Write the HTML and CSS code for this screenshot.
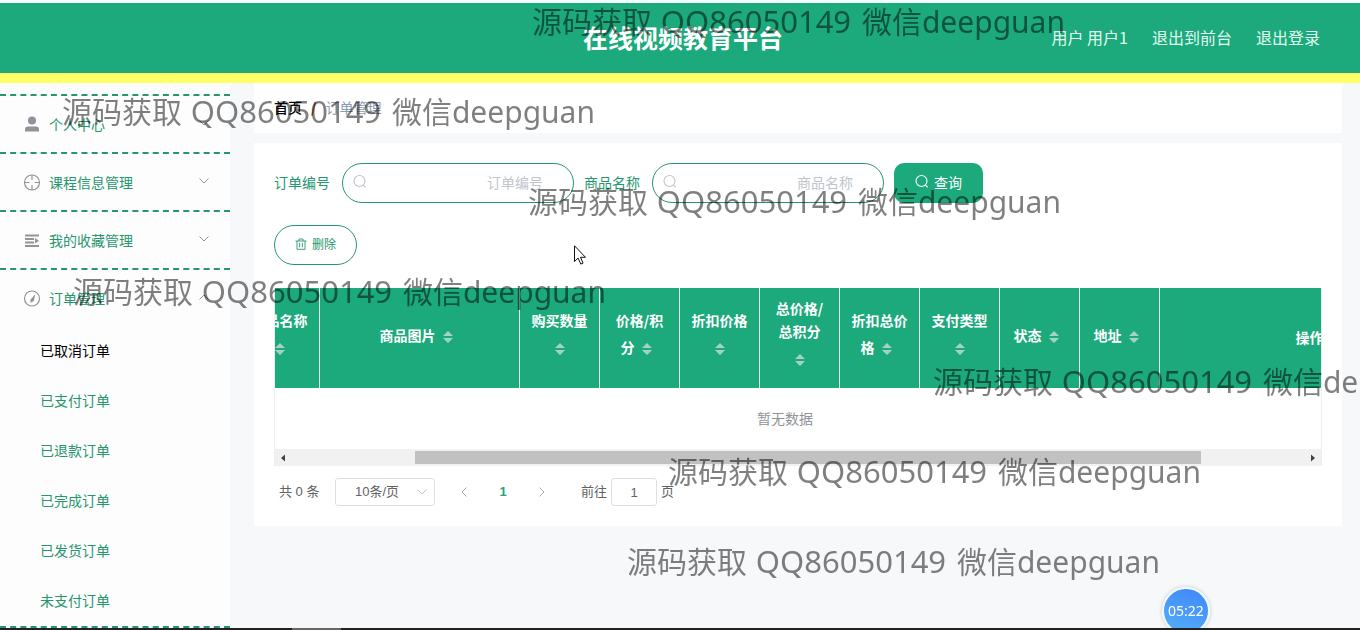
FILE: index.html
```html
<!DOCTYPE html>
<html lang="zh-CN">
<head>
<meta charset="utf-8">
<title>在线视频教育平台</title>
<link rel="stylesheet" href="styles.css">
</head>
<body>
<svg class="sprite" aria-hidden="true">
  <symbol id="down" viewBox="0 0 12 12"><path d="M1.500 3.500 6 8l4.500-4.500" fill="none" stroke="currentColor"/></symbol>
  <symbol id="search" viewBox="0 0 16 16"><circle cx="7.500" cy="7" r="5.500" fill="none" stroke="currentColor" stroke-width="1.100"/><path d="m11.500 11.200 2.200 2.200" stroke="currentColor" stroke-width="1.100"/></symbol>
  <symbol id="sort" viewBox="0 0 10 12"><path d="M0 5 5 0l5 5zM0 7h10l-5 5z" fill="currentColor"/></symbol>
</svg>

<header class="header">
  <h1 class="title">在线视频教育平台</h1>
  <nav class="user-nav">
    <span>用户 用户1</span>
    <a href="#">退出到前台</a>
    <a href="#">退出登录</a>
  </nav>
</header>

<div class="layout">
  <aside class="sidebar">
    <ul class="menu">
      <li class="menu-group">
        <a class="menu-title" href="#">
          <svg class="menu-icon" viewBox="0 0 18 18"><circle cx="9" cy="5.500" r="4" fill="currentColor"/><path d="M2 16.500V14q0-2.500 3-2.500h8q3 0 3 2.500v2.500z" fill="currentColor"/></svg>
          <span>个人中心</span><svg class="arrow"><use href="#down"/></svg>
        </a>
      </li>
      <li class="menu-group">
        <a class="menu-title" href="#">
          <svg class="menu-icon" viewBox="0 0 18 18" fill="none" stroke="currentColor" stroke-width="1.200"><circle cx="9" cy="9.500" r="7.500"/><path d="M9 2v5M9 12v5M1.500 9.500h5M11.500 9.500h5"/></svg>
          <span>课程信息管理</span><svg class="arrow"><use href="#down"/></svg>
        </a>
      </li>
      <li class="menu-group">
        <a class="menu-title" href="#">
          <svg class="menu-icon" viewBox="0 0 18 18" fill="none" stroke="currentColor" stroke-width="1.800"><path d="M2 4.500h14M2 8h9M2 11.500h9M2 15h14"/><path d="m12 7 4 2.700-4 2.700z" fill="currentColor" stroke="none"/></svg>
          <span>我的收藏管理</span><svg class="arrow"><use href="#down"/></svg>
        </a>
      </li>
      <li class="menu-group">
        <a class="menu-title" href="#">
          <svg class="menu-icon" viewBox="0 0 18 18"><circle cx="9" cy="9.500" r="7.500" fill="none" stroke="currentColor" stroke-width="1.200"/><path d="m12.300 5-1.500 7-3.200 1.800-.2-3z" fill="currentColor"/></svg>
          <span>订单管理</span><svg class="arrow arrow-open"><use href="#down"/></svg>
        </a>
        <ul class="submenu">
          <li><a class="active" href="#">已取消订单</a></li>
          <li><a href="#">已支付订单</a></li>
          <li><a href="#">已退款订单</a></li>
          <li><a href="#">已完成订单</a></li>
          <li><a href="#">已发货订单</a></li>
          <li><a href="#">未支付订单</a></li>
        </ul>
      </li>
    </ul>
  </aside>

  <main class="main">
    <nav class="breadcrumb"><a href="#">首页</a><span class="slash">/</span><span>订单管理</span></nav>

    <section class="card">
      <form class="filters">
        <label for="order-no">订单编号</label>
        <div class="search-box"><svg class="search-icon"><use href="#search"/></svg><input id="order-no" type="text" placeholder="订单编号"></div>
        <label for="goods-name">商品名称</label>
        <div class="search-box"><svg class="search-icon"><use href="#search"/></svg><input id="goods-name" type="text" placeholder="商品名称"></div>
        <button class="query" type="button"><svg class="search-icon"><use href="#search"/></svg>查询</button>
      </form>

      <button class="delete" type="button"><svg class="trash" viewBox="0 0 12 12" fill="none" stroke="currentColor" stroke-width=".9"><path d="M.5 3h11M4 3V1h4v2M2 3v8.300h8V3M4.600 5v4.300M7.400 5v4.300"/></svg>删除</button>

      <div class="table-box">
        <table class="orders">
          <colgroup><col class="col-s"><col class="col-m"><col class="col-s" span="8"><col class="col-l"></colgroup>
          <thead>
            <tr>
              <th>商品名称<br><span class="sort"><svg><use href="#sort"/></svg></span></th>
              <th>商品图片<span class="sort"><svg><use href="#sort"/></svg></span></th>
              <th>购买数量<br><span class="sort"><svg><use href="#sort"/></svg></span></th>
              <th>价格/积<br>分<span class="sort"><svg><use href="#sort"/></svg></span></th>
              <th>折扣价格<br><span class="sort"><svg><use href="#sort"/></svg></span></th>
              <th>总价格/<br>总积分<br><span class="sort"><svg><use href="#sort"/></svg></span></th>
              <th>折扣总价<br>格<span class="sort"><svg><use href="#sort"/></svg></span></th>
              <th>支付类型<br><span class="sort"><svg><use href="#sort"/></svg></span></th>
              <th>状态<span class="sort"><svg><use href="#sort"/></svg></span></th>
              <th>地址<span class="sort"><svg><use href="#sort"/></svg></span></th>
              <th>操作</th>
            </tr>
          </thead>
          <tbody><tr><td colspan="11">暂无数据</td></tr></tbody>
        </table>
        <div class="scrollbar">
          <svg class="scroll-arrow" viewBox="0 0 16 16"><path d="M10 4.500v7L6 8z" fill="#404040"/></svg>
          <div class="track"><div class="thumb"></div></div>
          <svg class="scroll-arrow" viewBox="0 0 16 16"><path d="M6 4.500v7L10 8z" fill="#404040"/></svg>
        </div>
      </div>

      <div class="pagination">
        <span class="total">共 0 条</span>
        <div class="size-box"><select aria-label="每页条数"><option>10条/页</option></select><svg><use href="#down"/></svg></div>
        <button class="page prev" type="button" aria-label="上一页"><svg><use href="#down"/></svg></button>
        <button class="page current" type="button">1</button>
        <button class="page next" type="button" aria-label="下一页"><svg><use href="#down"/></svg></button>
        <label class="jump" for="page-no">前往</label>
        <input class="page-no" id="page-no" type="text" value="1">
        <span>页</span>
      </div>
    </section>
  </main>
</div>

<div class="overlay">
  <span class="mark m1">源码获取 <span class="qq">QQ86050149</span> 微信deepguan</span>
  <span class="mark m2">源码获取 <span class="qq">QQ86050149</span> 微信deepguan</span>
  <span class="mark m3">源码获取 <span class="qq">QQ86050149</span> 微信deepguan</span>
  <span class="mark m4">源码获取 <span class="qq">QQ86050149</span> 微信deepguan</span>
  <span class="mark m5">源码获取 <span class="qq">QQ86050149</span> 微信deepguan</span>
  <span class="mark m6">源码获取 <span class="qq">QQ86050149</span> 微信deepguan</span>
  <span class="mark m7">源码获取 <span class="qq">QQ86050149</span> 微信deepguan</span>
  <svg class="cursor" viewBox="0 0 12 20"><path d="M.5.800v15.700l3.600-3.400 2.700 6 2.300-1-2.600-5.800h5z" fill="#fff" stroke="#111"/></svg>
  <div class="timer">05:22</div>
  <div class="taskbar"><div class="task"></div></div>
</div>
</body>
</html>
```
FILE: styles.css
```css
:root {
  --green: #1ca97b;
  --text-green: #26966e;
}

* { box-sizing: border-box; }

body {
  margin: 0;
  height: 100vh;
  overflow: hidden;
  display: flex;
  flex-direction: column;
  background: #f6f8fa;
  color: #606266;
  font: 14px/20px "Noto Sans CJK SC", sans-serif;
}

a { color: inherit; text-decoration: none; }
ul { list-style: none; margin: 0; padding: 0; }
button, input, select { font: inherit; color: inherit; }
.sprite { display: none; }

.header {
  flex: none;
  display: grid;
  grid-template-columns: 1fr auto 1fr;
  align-items: center;
  height: 83px;
  padding: 0 40px;
  border-top: 3px solid #f2fdf9;
  border-bottom: 10px solid #ffff66;
  background: var(--green);
  color: #fff;
}
.title {
  grid-column: 2;
  margin: 0;
  padding: 0 0 2px 6px;
  font-size: 25px;
  line-height: 36px;
}
.user-nav {
  display: flex;
  justify-content: flex-end;
  gap: 24px;
  padding-bottom: 2px;
  font-size: 16px;
  line-height: 24px;
  color: #e2fbf2;
}

.layout { flex: 1; display: flex; min-height: 0; }

.sidebar {
  flex: none;
  width: 230px;
  padding-top: 11px;
  background: #fdfdfd;
  color: var(--text-green);
}
.menu { border-top: 2px dashed var(--text-green); }
.menu-group { border-bottom: 2px dashed var(--text-green); }
.menu-title {
  display: flex;
  align-items: center;
  height: 56px;
  padding: 0 20px 0 23px;
}
.menu-icon { width: 18px; height: 18px; margin-right: 8px; color: #909399; }
.arrow { width: 12px; height: 12px; margin: 0 0 3px auto; color: #909399; }
.arrow-open { transform: rotate(180deg); }
.submenu a { display: block; height: 50px; padding-left: 40px; line-height: 48px; }
.submenu .active { color: #000; }

.main { flex: 1; min-width: 0; padding: 0 18px 0 24px; }
.breadcrumb {
  display: flex;
  align-items: center;
  height: 50px;
  margin-bottom: 10px;
  padding: 0 20px 2px;
  background: #fff;
  color: #8b9bb0;
}
.breadcrumb a { color: #000; font-weight: 500; }
.slash { margin: 0 9px; color: #d0562a; font-weight: 700; }

.card { padding: 20px; background: #fff; }
.filters {
  display: flex;
  align-items: center;
  gap: 10px;
  margin-bottom: 22px;
  color: var(--text-green);
}
.filters label { margin-right: 2px; padding-bottom: 2px; }
.search-box {
  display: flex;
  align-items: center;
  width: 232px;
  height: 40px;
  padding: 0 30px 2px 9px;
  border: 1px solid var(--text-green);
  border-radius: 20px;
  color: #c0c4cc;
}
.search-box input {
  flex: 1;
  min-width: 0;
  padding: 0;
  border: 0;
  outline: 0;
  background: none;
  text-align: right;
}
.search-box input::placeholder { color: #c0c4cc; }
.search-icon { flex: none; width: 16px; height: 16px; }
.query {
  display: flex;
  align-items: center;
  gap: 4px;
  height: 40px;
  padding: 0 21px 2px 20px;
  border: 0;
  border-radius: 10px;
  background: var(--green);
  color: #fff;
}
.delete {
  display: flex;
  align-items: center;
  gap: 5px;
  height: 40px;
  margin-bottom: 23px;
  padding: 0 20px 2px;
  border: 1px solid var(--text-green);
  border-radius: 20px;
  background: #fff;
  color: var(--text-green);
  font-size: 12px;
}
.trash { width: 12px; height: 12px; }

.table-box { overflow: hidden; border: 1px solid #ebeef5; border-top: 0; border-bottom: 0; }
.orders {
  width: 1220px;
  margin-left: -35px;
  table-layout: fixed;
  border-collapse: separate;
  border-spacing: 0;
}
.col-s { width: 80px; }
.col-m { width: 200px; }
.col-l { width: 300px; }
.orders th {
  height: 100px;
  padding: 0 0 2px;
  border-right: 1px solid #ebf5f1;
  background: var(--green);
  color: #fff;
  line-height: 23px;
  white-space: nowrap;
}
.orders td {
  height: 61px;
  padding: 0 130px 2px 0;
  color: #909399;
  text-align: center;
}
.sort {
  display: inline-flex;
  align-items: center;
  justify-content: center;
  width: 24px;
  height: 34px;
  vertical-align: middle;
  color: #a5d3c3;
}
.sort svg { width: 10px; height: 12px; }

.scrollbar { display: flex; align-items: center; height: 17px; background: #f1f1f1; }
.scroll-arrow { width: 16px; height: 16px; }
.track { flex: 1; }
.thumb { width: 77.5%; height: 13px; margin-left: 12.2%; background: #c1c1c1; }

.pagination {
  display: flex;
  align-items: center;
  height: 28px;
  margin-top: 12px;
  padding-left: 5px;
  font: 13px/20px "Liberation Sans", "Noto Sans CJK SC", sans-serif;
}
.total { width: 56px; }
.size-box { position: relative; width: 100px; height: 28px; }
.size-box select {
  appearance: none;
  width: 100%;
  height: 100%;
  padding: 0 20px 0 19px;
  border: 1px solid #dcdfe6;
  border-radius: 3px;
  background: #fff;
}
.size-box svg {
  position: absolute;
  top: 8px;
  right: 7px;
  width: 12px;
  height: 12px;
  color: #c0c4cc;
  pointer-events: none;
}
.page {
  display: flex;
  align-items: center;
  justify-content: center;
  width: 30px;
  height: 28px;
  padding: 0;
  border: 0;
  background: none;
  color: #a8abb2;
}
.page svg { width: 12px; height: 12px; }
.prev { margin-left: 14px; }
.prev svg { transform: rotate(90deg); }
.next svg { transform: rotate(-90deg); }
.current { margin: 0 9px; color: var(--green); font-weight: 700; }
.jump { margin-left: 24px; }
.page-no {
  width: 46px;
  height: 28px;
  margin: 0 4px;
  padding: 0;
  border: 1px solid #dcdfe6;
  border-radius: 3px;
  text-align: center;
}

.overlay { position: fixed; inset: 0; overflow: hidden; pointer-events: none; }
.mark {
  position: absolute;
  color: rgba(0, 0, 0, 0.5);
  font: 30px/40px "Noto Sans", "Noto Sans CJK SC", sans-serif;
  white-space: nowrap;
}
.qq { margin: 0 3px 0 1px; font-size: 31px; }
.m1 { left: 532px; top: 1px; }
.m2 { left: 62px; top: 91px; }
.m3 { left: 528px; top: 181px; }
.m4 { left: 73px; top: 271px; }
.m5 { left: 933px; top: 361px; }
.m6 { left: 668px; top: 451px; }
.m7 { left: 627px; top: 541px; }
.cursor { position: absolute; left: 574px; top: 245px; width: 12px; height: 20px; }
.timer {
  position: absolute;
  left: 1162px;
  top: 587px;
  width: 48px;
  height: 48px;
  border: 2px solid #f0fbff;
  border-radius: 50%;
  background: linear-gradient(200deg, #3f86f8, #55b0fb);
  box-shadow: 0 0 4px rgba(0, 0, 0, 0.2);
  color: #fff;
  font: 14px/44px "Noto Sans", sans-serif;
  text-align: center;
}
.taskbar { position: absolute; inset: auto 0 0; height: 2px; background: #222; }
.task { width: 49px; height: 2px; margin-left: 292px; background: #666; }
```
